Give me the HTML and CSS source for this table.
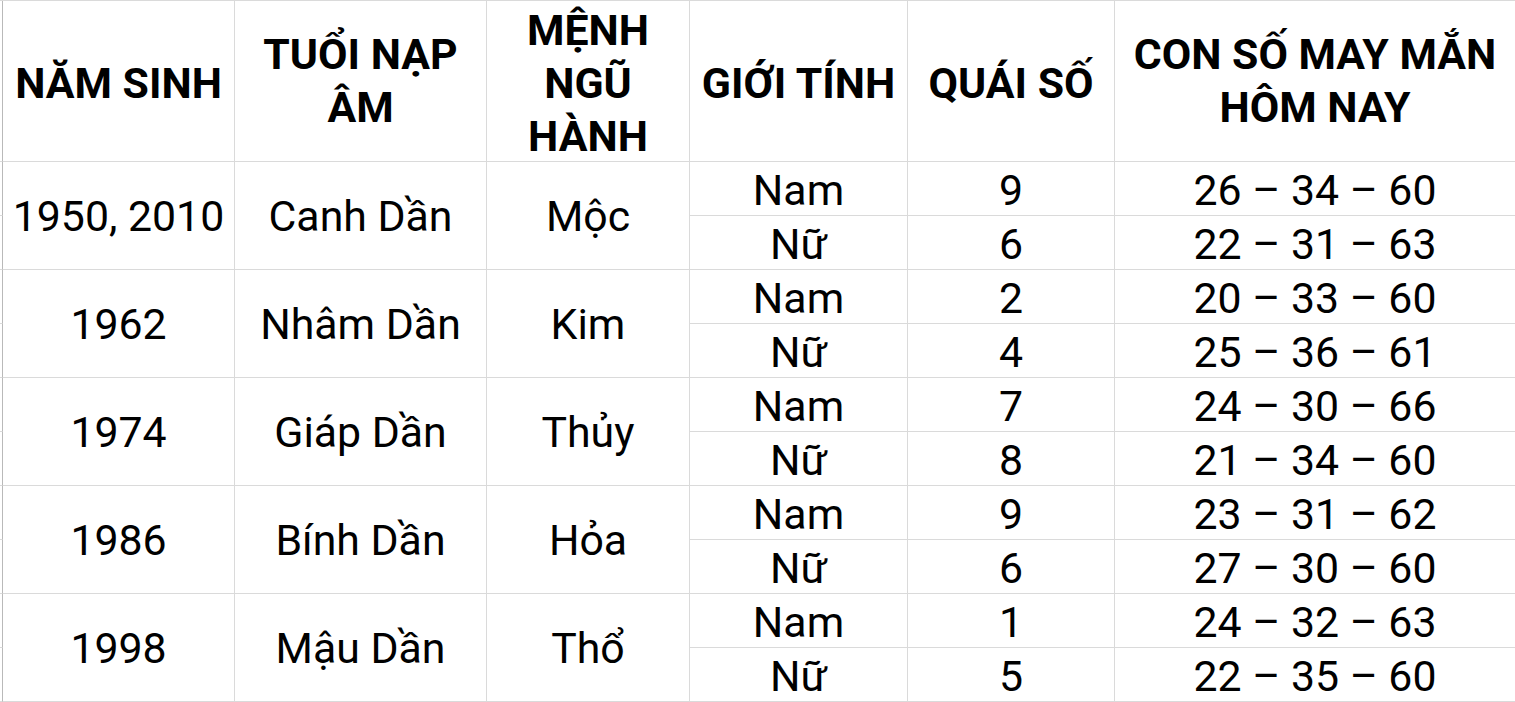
FILE: index.html
```html
<!DOCTYPE html>
<html lang="vi">
<head>
<meta charset="utf-8">
<title>Con số may mắn</title>
<link rel="stylesheet" href="styles.css">
</head>
<body>
<div class="sheet">
  <div class="stub"></div>
  <div class="cell head">NĂM SINH</div>
  <div class="cell head two">TUỔI NẠP<br>ÂM</div>
  <div class="cell head">MỆNH<br>NGŨ<br>HÀNH</div>
  <div class="cell head">GIỚI TÍNH</div>
  <div class="cell head">QUÁI SỐ</div>
  <div class="cell head two">CON SỐ MAY MẮN<br>HÔM NAY</div>

  <div class="stub"></div>
  <div class="cell merged">1950, 2010</div>
  <div class="cell merged">Canh Dần</div>
  <div class="cell merged">Mộc</div>
  <div class="cell">Nam</div>
  <div class="cell">9</div>
  <div class="cell">26 – 34 – 60</div>
  <div class="stub"></div>
  <div class="cell">Nữ</div>
  <div class="cell">6</div>
  <div class="cell">22 – 31 – 63</div>

  <div class="stub"></div>
  <div class="cell merged">1962</div>
  <div class="cell merged">Nhâm Dần</div>
  <div class="cell merged">Kim</div>
  <div class="cell">Nam</div>
  <div class="cell">2</div>
  <div class="cell">20 – 33 – 60</div>
  <div class="stub"></div>
  <div class="cell">Nữ</div>
  <div class="cell">4</div>
  <div class="cell">25 – 36 – 61</div>

  <div class="stub"></div>
  <div class="cell merged">1974</div>
  <div class="cell merged">Giáp Dần</div>
  <div class="cell merged">Thủy</div>
  <div class="cell">Nam</div>
  <div class="cell">7</div>
  <div class="cell">24 – 30 – 66</div>
  <div class="stub"></div>
  <div class="cell">Nữ</div>
  <div class="cell">8</div>
  <div class="cell">21 – 34 – 60</div>

  <div class="stub"></div>
  <div class="cell merged">1986</div>
  <div class="cell merged">Bính Dần</div>
  <div class="cell merged">Hỏa</div>
  <div class="cell">Nam</div>
  <div class="cell">9</div>
  <div class="cell">23 – 31 – 62</div>
  <div class="stub"></div>
  <div class="cell">Nữ</div>
  <div class="cell">6</div>
  <div class="cell">27 – 30 – 60</div>

  <div class="stub"></div>
  <div class="cell merged">1998</div>
  <div class="cell merged">Mậu Dần</div>
  <div class="cell merged">Thổ</div>
  <div class="cell">Nam</div>
  <div class="cell">1</div>
  <div class="cell">24 – 32 – 63</div>
  <div class="stub"></div>
  <div class="cell">Nữ</div>
  <div class="cell">5</div>
  <div class="cell">22 – 35 – 60</div>
</div>
</body>
</html>
```

FILE: styles.css
```css
html, body {
  margin: 0;
  padding: 0;
  background: #ffffff;
  overflow: hidden;
}

.sheet {
  display: grid;
  grid-template-columns: 3px 232px 252px 203px 218px 207px 401px;
  grid-template-rows: 161px repeat(10, 54px);
  border-top: 1px solid #dadada;
  width: 1516px;
  font-family: Roboto, "Noto Sans", "Liberation Sans", sans-serif;
  font-size: 42.8px;
  color: #000000;
}

.stub {
  box-sizing: border-box;
  border-right: 1px solid #b9b9b9;
  border-bottom: 1px solid #dadada;
}

.cell {
  box-sizing: border-box;
  display: flex;
  align-items: center;
  justify-content: center;
  text-align: center;
  border-right: 1px solid #dadada;
  border-bottom: 1px solid #dadada;
  padding-top: 2px;
  white-space: nowrap;
}

.head {
  font-weight: 700;
  line-height: 53px;
  padding-top: 4px;
}

.head.two {
  padding-top: 0;
}

.merged {
  grid-row: span 2;
  padding-top: 0;
}
```
